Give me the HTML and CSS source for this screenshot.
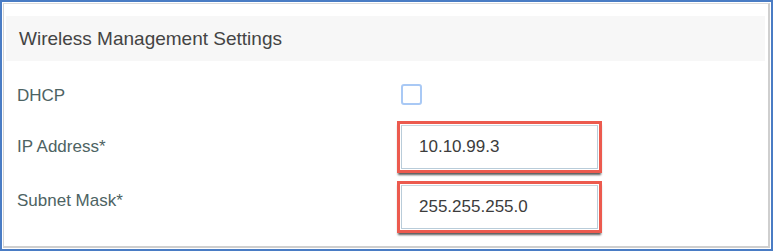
FILE: index.html
```html
<!DOCTYPE html>
<html>
<head>
<meta charset="utf-8">
<link rel="stylesheet" href="styles.css">
</head>
<body>
<div class="frame">
  <div class="inner">
    <div class="header">Wireless Management Settings</div>
    <div class="form">
      <div class="row row-dhcp">
        <div class="label">DHCP</div>
        <div class="control"><span class="checkbox"></span></div>
      </div>
      <div class="row row-ip">
        <div class="label">IP Address*</div>
        <div class="control"><div class="highlight"><div class="input">10.10.99.3</div></div></div>
      </div>
      <div class="row row-mask">
        <div class="label">Subnet Mask*</div>
        <div class="control"><div class="highlight"><div class="input">255.255.255.0</div></div></div>
      </div>
    </div>
  </div>
</div>
</body>
</html>
```
FILE: styles.css
```css
html, body {
  margin: 0;
  padding: 0;
  background: #ffffff;
}
body {
  font-family: "Liberation Sans", Arial, sans-serif;
}
.frame {
  width: 773px;
  height: 251px;
  box-sizing: border-box;
  border: 2px solid #4a7cc4;
  padding: 1px;
  background: #ffffff;
}
.inner {
  height: 100%;
  box-sizing: border-box;
  border-top: 1px solid #dcdcdc;
  border-left: 1px solid #d4d4d4;
  border-right: 2px solid #cfcfcf;
  border-bottom: 2px solid #cfcfcf;
  padding: 12px 3px 0 2px;
}
.header {
  height: 45px;
  background: #f7f7f7;
  display: flex;
  align-items: center;
  padding-left: 13px;
  font-size: 19px;
  color: #444444;
}
.form {
  padding-left: 11px;
}
.row {
  display: grid;
  grid-template-columns: 380px auto;
  align-items: center;
}
.label {
  font-size: 17px;
  color: #4d6363;
}
.row-dhcp {
  margin-top: 21px;
}
.row-dhcp .label {
  padding-top: 4px;
}
.checkbox {
  display: block;
  width: 17px;
  height: 17px;
  margin-left: 4px;
  border: 2px solid #a9c9f5;
  border-radius: 3px;
}
.row-ip {
  margin-top: 15px;
}
.row-mask {
  margin-top: 8px;
}
.row-mask .label {
  padding-bottom: 12px;
}
.highlight {
  width: 199px;
  height: 46px;
  border: 3px solid #ec5a4e;
  box-shadow: 0 3px 2px -1px #5a5a5a;
  padding: 0;
  background: #ffffff;
}
.input {
  box-sizing: border-box;
  height: 44px;
  margin: 1px 1px 0 1px;
  border: 1px solid #b9ccd9;
  border-top-color: #c9d6de;
  display: flex;
  align-items: center;
  padding-left: 17px;
  font-size: 17px;
  color: #3c3c3c;
}
```
